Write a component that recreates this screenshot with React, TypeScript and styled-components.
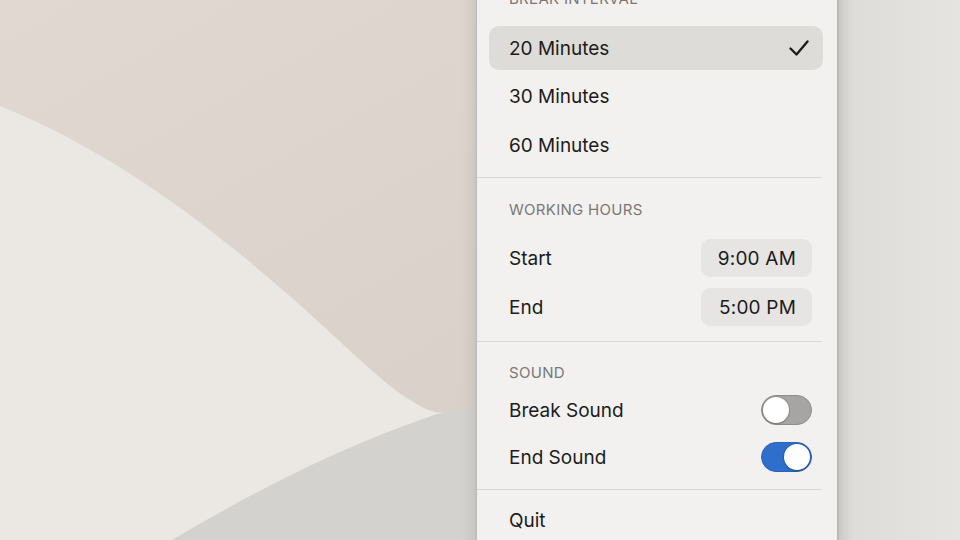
import React from "react";
import styled, { createGlobalStyle } from "styled-components";

const GlobalStyle = createGlobalStyle`
  html, body {
    margin: 0;
    padding: 0;
    background: #e2e0dc;
  }
  body {
    font-family: "Inter", "Noto Sans", sans-serif;
    -webkit-font-smoothing: antialiased;
  }
`;

const Desktop = styled.div`
  position: relative;
  width: 960px;
  height: 540px;
  overflow: hidden;
  display: flex;
  padding-left: 476px;
  box-sizing: border-box;
`;

const Wallpaper = styled.svg`
  position: absolute;
  inset: 0;
  width: 960px;
  height: 540px;
`;

const Panel = styled.div`
  position: relative;
  width: 361px;
  margin-top: -21px;
  padding-top: 10px;
  align-self: flex-start;
  background: #f2f1ef;
  border-left: 1px solid #bdbab6;
  box-sizing: border-box;
  box-shadow: 0 0 14px rgba(60, 55, 50, 0.18), 1px 0 2px rgba(0, 0, 0, 0.12);
  color: #1c1c1c;
`;

const Header = styled.div<{ $gap: number }>`
  height: 20px;
  line-height: 20px;
  padding-left: 32px;
  margin-bottom: ${(p) => p.$gap}px;
  font-size: 15px;
  letter-spacing: 0.3px;
  color: #7a7876;
`;

const Divider = styled.div<{ $top: number; $bottom: number }>`
  height: 1px;
  background: #dad8d5;
  margin: ${(p) => p.$top}px 15px ${(p) => p.$bottom}px 0;
`;

const Options = styled.div`
  display: flex;
  flex-direction: column;
  gap: 4.5px;
  margin: 0 14px 0 12px;
`;

const Option = styled.div<{ $selected?: boolean }>`
  height: 44px;
  display: flex;
  align-items: center;
  justify-content: space-between;
  padding: 0 14px 0 20px;
  border-radius: 10px;
  font-size: 19px;
  background: ${(p) => (p.$selected ? "#dddcd9" : "transparent")};
`;

const Rows = styled.div<{ $gap: number }>`
  display: flex;
  flex-direction: column;
  gap: ${(p) => p.$gap}px;
  margin: 0 25px 0 32px;
`;

const Row = styled.div<{ $height: number }>`
  height: ${(p) => p.$height}px;
  display: flex;
  align-items: center;
  justify-content: space-between;
  font-size: 19px;
`;

const TimePill = styled.div`
  width: 111px;
  height: 38px;
  box-sizing: border-box;
  padding-right: 16px;
  display: flex;
  align-items: center;
  justify-content: flex-end;
  border-radius: 9px;
  background: #e6e5e3;
  font-size: 19px;
  letter-spacing: 0.2px;
`;

const Track = styled.div<{ $on: boolean }>`
  width: 51px;
  height: 30px;
  box-sizing: border-box;
  border-radius: 15px;
  padding: 1px;
  display: flex;
  justify-content: ${(p) => (p.$on ? "flex-end" : "flex-start")};
  background: ${(p) => (p.$on ? "#2f6fcb" : "#a6a5a3")};
  border: 1px solid ${(p) => (p.$on ? "#2a63b7" : "#8e8d8b")};
`;

const Knob = styled.div`
  width: 26px;
  height: 26px;
  border-radius: 50%;
  background: #ffffff;
  box-shadow: 0 0 0 1px rgba(0, 0, 0, 0.1), 0 1px 2px rgba(0, 0, 0, 0.2);
`;

const Check = () => (
  <svg width="20" height="17" viewBox="0 0 20 17">
    <polyline
      points="1.5,8.5 7.5,14.5 18.5,1.5"
      fill="none"
      stroke="#1a1a1a"
      strokeWidth="2.3"
      strokeLinecap="round"
      strokeLinejoin="round"
    />
  </svg>
);

const Toggle = ({ on }: { on: boolean }) => (
  <Track $on={on}>
    <Knob />
  </Track>
);

const intervals = [
  { label: "20 Minutes", selected: true },
  { label: "30 Minutes", selected: false },
  { label: "60 Minutes", selected: false },
];

export default function App() {
  return (
    <>
      <GlobalStyle />
      <Desktop>
        <Wallpaper viewBox="0 0 960 540">
          <defs>
            <linearGradient id="sand" x1="0" y1="0" x2="1" y2="1">
              <stop offset="0" stopColor="#e0d8d1" />
              <stop offset="1" stopColor="#d5ccc5" />
            </linearGradient>
            <linearGradient id="side" x1="0" y1="0" x2="1" y2="0">
              <stop offset="0" stopColor="#d4d2cf" />
              <stop offset="0.15" stopColor="#dfddda" />
              <stop offset="1" stopColor="#e6e4e1" />
            </linearGradient>
          </defs>
          <rect width="960" height="540" fill="url(#sand)" />
          {/* pale dune sweeping down from the left edge */}
          <path
            d="M0 106 C 110 150, 210 225, 300 305 C 350 350, 385 385, 410 400 C 423 408, 432 413, 445 413 L 480 408 L 480 540 L 0 540 Z"
            fill="#ebe8e4"
          />
          {/* grey dune rising from the bottom */}
          <path
            d="M172 540 C 240 500, 330 450, 437 414 L 480 407 L 480 540 Z"
            fill="#d3d2ce"
          />
          <rect x="836" width="124" height="540" fill="url(#side)" />
        </Wallpaper>

        <Panel>
          <Header $gap={17}>BREAK INTERVAL</Header>
          <Options>
            {intervals.map((item) => (
              <Option key={item.label} $selected={item.selected}>
                {item.label}
                {item.selected && <Check />}
              </Option>
            ))}
          </Options>
          <Divider $top={10} $bottom={22} />

          <Header $gap={19}>WORKING HOURS</Header>
          <Rows $gap={11}>
            <Row $height={38}>
              Start
              <TimePill>9:00 AM</TimePill>
            </Row>
            <Row $height={38}>
              End
              <TimePill>5:00 PM</TimePill>
            </Row>
          </Rows>
          <Divider $top={15} $bottom={21} />

          <Header $gap={12}>SOUND</Header>
          <Rows $gap={17}>
            <Row $height={30}>
              Break Sound
              <Toggle on={false} />
            </Row>
            <Row $height={30}>
              End Sound
              <Toggle on={true} />
            </Row>
          </Rows>
          <Divider $top={17} $bottom={8} />

          <Rows $gap={0}>
            <Row $height={44}>Quit</Row>
          </Rows>
          <div style={{ height: 20 }} />
        </Panel>
      </Desktop>
    </>
  );
}
